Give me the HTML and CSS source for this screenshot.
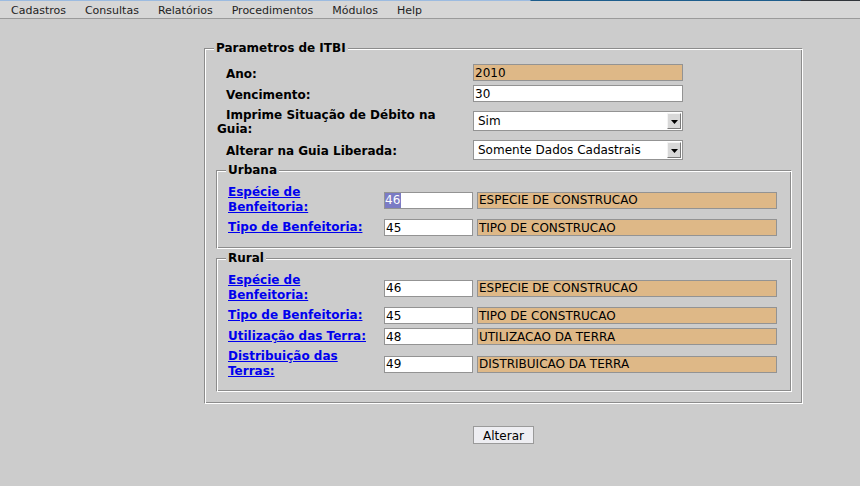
FILE: index.html
```html
<!DOCTYPE html>
<html lang="pt-BR">
<head>
<meta charset="utf-8">
<title>Parametros de ITBI</title>
<link rel="stylesheet" href="styles.css">
</head>
<body>
<div class="topline"></div>
<nav class="menubar">
  <span class="menu-item">Cadastros</span>
  <span class="menu-item">Consultas</span>
  <span class="menu-item">Relatórios</span>
  <span class="menu-item">Procedimentos</span>
  <span class="menu-item">Módulos</span>
  <span class="menu-item">Help</span>
</nav>
<main class="page">
  <form class="itbi-form">
    <fieldset class="group outer">
      <legend class="legend">Parametros de ITBI</legend>
      <div class="main-grid">
        <label class="lbl">Ano:</label>
        <input class="field ro wide" value="2010" readonly>
        <label class="lbl">Vencimento:</label>
        <input class="field wide" value="30">
        <label class="lbl">Imprime Situação de Débito na Guia:</label>
        <span class="select-wrap">
          <select class="select"><option>Sim</option><option>Não</option></select>
          <span class="arrow"><svg width="7" height="4" viewBox="0 0 7 4"><path d="M0 0H7L3.5 4Z" fill="#000"/></svg></span>
        </span>
        <label class="lbl">Alterar na Guia Liberada:</label>
        <span class="select-wrap">
          <select class="select"><option>Somente Dados Cadastrais</option></select>
          <span class="arrow"><svg width="7" height="4" viewBox="0 0 7 4"><path d="M0 0H7L3.5 4Z" fill="#000"/></svg></span>
        </span>
      </div>

      <fieldset class="group inner urbana">
        <legend class="legend">Urbana</legend>
        <div class="sub-grid">
          <a href="#" class="link">Espécie de Benfeitoria:</a>
          <span class="code-wrap"><input class="field code hidden-text" value="46"><span class="selection">46</span></span>
          <input class="field desc ro" value="ESPECIE DE CONSTRUCAO" readonly>

          <a href="#" class="link">Tipo de Benfeitoria:</a>
          <input class="field code" value="45">
          <input class="field desc ro" value="TIPO DE CONSTRUCAO" readonly>
        </div>
      </fieldset>

      <fieldset class="group inner rural">
        <legend class="legend">Rural</legend>
        <div class="sub-grid">
          <a href="#" class="link">Espécie de Benfeitoria:</a>
          <input class="field code" value="46">
          <input class="field desc ro" value="ESPECIE DE CONSTRUCAO" readonly>

          <a href="#" class="link">Tipo de Benfeitoria:</a>
          <input class="field code" value="45">
          <input class="field desc ro" value="TIPO DE CONSTRUCAO" readonly>

          <a href="#" class="link">Utilização das Terra:</a>
          <input class="field code" value="48">
          <input class="field desc ro" value="UTILIZACAO DA TERRA" readonly>

          <a href="#" class="link">Distribuição das Terras:</a>
          <input class="field code" value="49">
          <input class="field desc ro" value="DISTRIBUICAO DA TERRA" readonly>
        </div>
      </fieldset>
    </fieldset>
    <div class="actions">
      <button type="button" class="btn">Alterar</button>
    </div>
  </form>
</main>
</body>
</html>
```

FILE: styles.css
```css
html, body {
  margin: 0;
  padding: 0;
}
body {
  background: #cccccc;
  font-family: "DejaVu Sans", Verdana, sans-serif;
  font-size: 12px;
  color: #000;
  width: 860px;
  height: 486px;
  overflow: hidden;
}
.topline {
  height: 1px;
  background: linear-gradient(to right, #9cbbe0 0, #9cbbe0 530px, #1d5d8c 531px, #1d5d8c 800px, #30343a 801px);
}
.menubar {
  display: flex;
  height: 18px;
  box-sizing: border-box;
  padding-top: 2px;
  align-items: center;
  padding-left: 1px;
  background: #d6d6d6;
  border-bottom: 1px solid #9a9a9a;
  font-size: 11px;
  color: #1e1e1e;
}
.menu-item {
  padding: 0 9px 0 10px;
  line-height: 15px;
}
.page {
  padding: 22px 0 0 204px;
}
.itbi-form {
  width: 599px;
}
.group {
  margin: 0;
  border-style: solid;
  border-width: 1px;
  border-color: #8c8c8c #ffffff #ffffff #8c8c8c;
  box-shadow: inset 1px 1px 0 #ffffff, inset -1px -1px 0 #8c8c8c;
  min-width: 0;
}
.legend {
  font-weight: bold;
  font-size: 12px;
  line-height: 15px;
  padding: 0 2px;
  margin-left: -2px;
  background: #cccccc;
}
.outer {
  padding: 8px 10px 11px 11px;
  width: 599px;
  box-sizing: border-box;
}
.main-grid {
  display: grid;
  grid-template-columns: 257px 210px;
  grid-template-rows: 17px 17px 30px 20px;
  row-gap: 4px;
  align-items: center;
  font-weight: bold;
}
.lbl {
  padding: 2px 0 0 1px;
  text-indent: 9px;
  line-height: 14px;
}
.field {
  box-sizing: border-box;
  height: 17px;
  margin: 0;
  border: 1px solid #939393;
  padding: 0 1px;
  background: #ffffff;
  font-family: "DejaVu Sans", Verdana, sans-serif;
  font-size: 12px;
  color: #000;
  outline: none;
}
.field.ro {
  background: #deb887;
}
.field.wide {
  width: 210px;
}
.select-wrap {
  position: relative;
  display: block;
  width: 210px;
  height: 20px;
}
.select {
  appearance: none;
  -webkit-appearance: none;
  box-sizing: border-box;
  width: 210px;
  height: 20px;
  margin: 0;
  border: 1px solid #939393;
  border-radius: 0;
  padding: 0 0 0 4px;
  background: #ffffff;
  font-family: "DejaVu Sans", Verdana, sans-serif;
  font-size: 12px;
  color: #000;
  outline: none;
}
.arrow {
  position: absolute;
  top: 2px;
  right: 2px;
  width: 14px;
  height: 16px;
  box-sizing: border-box;
  background: #d8d8d8;
  border-style: solid;
  border-width: 1px;
  border-color: #f4f4f4 #7a7a7a #7a7a7a #f4f4f4;
  display: flex;
  align-items: center;
  justify-content: center;
  pointer-events: none;
}
.arrow svg {
  display: block;
  margin-top: 1px;
}
.inner {
  padding: 7px 12px 12px 11px;
  width: 576px;
  box-sizing: border-box;
}
.urbana {
  margin-top: 3px;
}
.rural {
  margin-top: 2px;
}
.sub-grid {
  display: grid;
  grid-template-columns: 156px 89px 300px;
  column-gap: 0;
  row-gap: 4px;
  align-items: center;
}
.sub-grid .desc {
  margin-left: 4px;
  width: 300px;
}
.link {
  font-weight: bold;
  color: #0000ee;
  text-decoration: underline;
  line-height: 15px;
  padding-right: 6px;
}
.code {
  width: 89px;
}
.code-wrap {
  position: relative;
  display: block;
  width: 89px;
  height: 17px;
}
.hidden-text {
  color: transparent;
}
.selection {
  position: absolute;
  left: 1px;
  top: 1px;
  height: 15px;
  line-height: 15px;
  padding: 0 1px 0 0;
  background: #7b7bc4;
  color: #ffffff;
  font-size: 12px;
}
.actions {
  display: flex;
  justify-content: center;
  margin-top: 22px;
}
.btn {
  width: 61px;
  height: 18px;
  margin: 0;
  padding: 1px 0 0;
  border: 1px solid #9a9a9a;
  border-radius: 0;
  background: #eeeef2;
  font-family: "DejaVu Sans", Verdana, sans-serif;
  font-size: 12px;
  line-height: 14px;
  color: #000;
}
```
